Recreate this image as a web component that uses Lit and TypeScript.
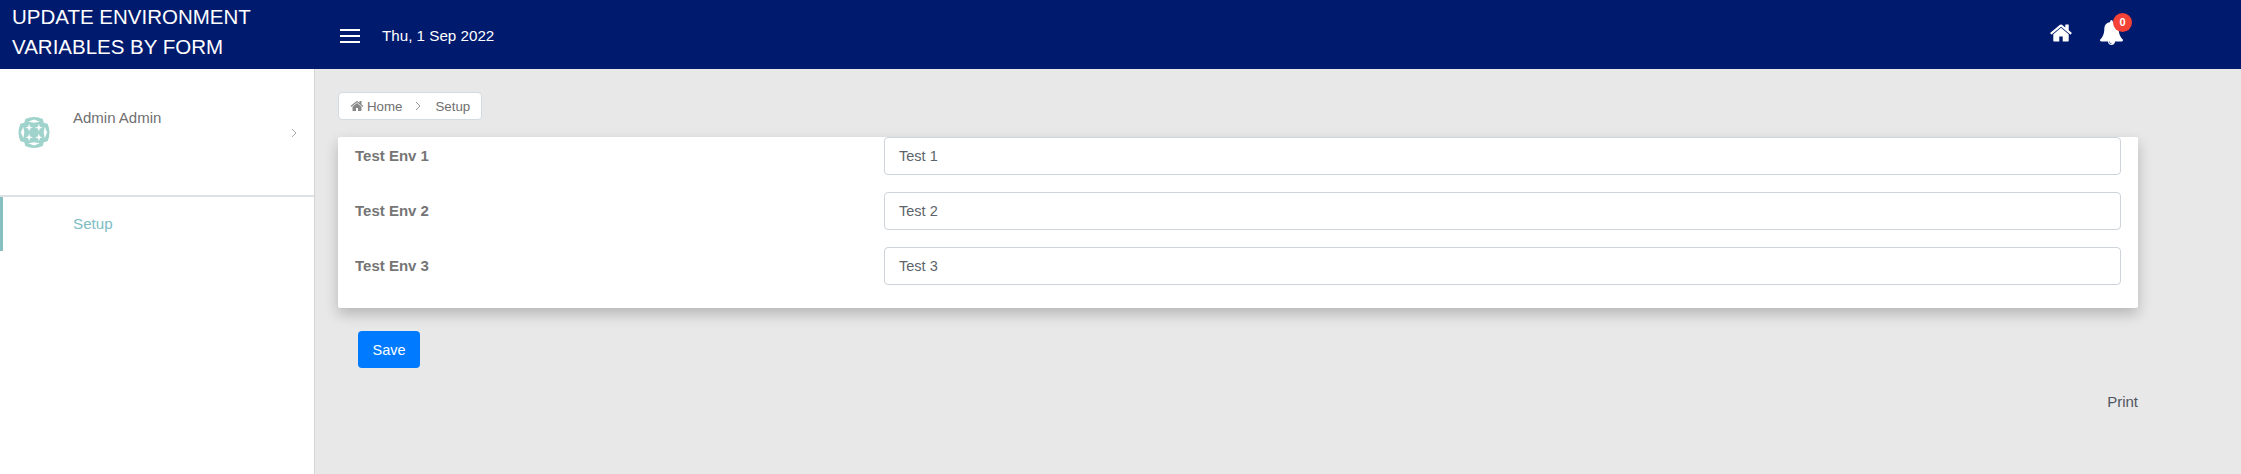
import { LitElement, html, css, svg } from "lit";
import { customElement } from "lit/decorators.js";

const HOME = "M1472 992v480q0 26-19 45t-45 19h-384v-384h-256v384h-384q-26 0-45-19t-19-45v-480q0-1 .5-3t.5-3l575-474 575 474q1 2 1 6zm223-69l-62 74q-8 9-21 11h-3q-13 0-21-7l-692-577-692 577q-12 8-24 7-13-2-21-11l-62-74q-8-10-7-23.5t11-21.5l719-599q32-26 76-26t76 26l244 204v-195q0-14 9-23t23-9h192q14 0 23 9t9 23v408l219 182q10 8 11 21.5t-7 23.5z";
const BELL = "M912 1696q0-16-16-16-59 0-101.5-42.5t-42.5-101.5q0-16-16-16t-16 16q0 73 51.5 124.5t124.5 51.5q16 0 16-16zm816-288q0 52-38 90t-90 38h-448q0 106-75 181t-181 75-181-75-75-181h-448q-52 0-90-38t-38-90q50-42 91-88t85-119.5 74.5-158.5 50-206 19.5-260q0-152 117-282.5t307-158.5q-8-19-8-39 0-40 28-68t68-28 68 28 28 68q0 20-8 39 190 28 307 158.5t117 282.5q0 139 19.5 260t50 206 74.5 158.5 85 119.5 91 88z";

const star = (x: number, y: number) =>
  svg`<path d="M${x} ${y - 4} L${x + 1} ${y - 1} L${x + 4} ${y} L${x + 1} ${y + 1} L${x} ${y + 4} L${x - 1} ${y + 1} L${x - 4} ${y} L${x - 1} ${y - 1} Z"/>`;

const logo = svg`<svg class="logo" viewBox="0 0 34 34" width="34" height="33">
  <path fill="#9fd3cb" d="M8 3 Q17 -1 26 3 L27 7 L31 8 Q35 17 31 26 L27 27 L26 31 Q17 35 8 31 L7 27 L3 26 Q-1 17 3 8 L7 7 Z"/>
  <g fill="#fff">
    ${star(12, 12)}${star(22, 12)}${star(12, 22)}${star(22, 22)}
    <path d="M11 6 L17 3.500 L23 6 L17 7 Z"/><path d="M11 28 L17 30.500 L23 28 L17 27 Z"/>
    <path d="M6 11 L3.500 17 L6 23 L7 17 Z"/><path d="M28 11 L30.500 17 L28 23 L27 17 Z"/>
  </g>
</svg>`;

@customElement("app-root")
export class AppRoot extends LitElement {
  static styles = css`
    :host { display: block; width: 2241px; height: 474px; overflow: hidden; background: #e8e8e8;
      font-family: "Liberation Sans", Arial, sans-serif; font-size: 14px; color: #666; }
    * { box-sizing: border-box; }
    .top { height: 69px; background: #001a6e; color: #fff; display: flex; align-items: center; }
    .title { width: 314px; padding: 0 12px; font-size: 20.500px; line-height: 30px; margin-top: -5px; flex: none; }
    .burger { width: 20px; height: 14px; margin: 2px 22px 0 26px; display: flex; flex-direction: column; justify-content: space-between; flex: none; }
    .burger i { display: block; height: 2px; background: #fff; }
    .date { font-size: 15.200px; margin-top: 2px; }
    .actions { margin-left: auto; margin-right: 117px; margin-top: -4px; display: flex; align-items: center; gap: 26px; }
    .home { width: 24px; height: 24px; display: block; fill: #fff; }
    .bell-wrap { position: relative; width: 25px; height: 25px; }
    .bell { width: 25px; height: 25px; display: block; fill: #fff; }
    .badge { position: absolute; left: 14px; top: -7px; width: 19px; height: 19px; border-radius: 50%;
      background: #f44336; color: #fff; font-size: 11px; font-weight: 700; line-height: 19px; text-align: center; }
    .body { display: flex; height: 405px; }
    .side { width: 315px; flex: none; background: #fff; border-right: 1px solid #d6d6d6; }
    .user { height: 128px; border-bottom: 2px solid #dee2e6; display: flex; padding: 0 17px; }
    .logo { margin-top: 47px; flex: none; }
    .name { margin: 40px 0 0 22px; font-size: 15px; line-height: 18px; color: #707070; }
    .chev { margin-left: auto; margin-top: 59px; width: 6px; height: 10px; fill: none; stroke: #aaa; stroke-width: 1; }
    .nav { height: 54px; border-left: 3px solid #85bfbf; padding: 18px 0 0 70px; color: #7dbdc4; font-size: 15.200px; line-height: 18px; }
    .main { flex: 1; padding: 23px 103px 0 23px; min-width: 0; }
    .crumb { display: inline-flex; align-items: center; height: 28px; padding: 0 11px; background: #fff;
      border: 1px solid #d3dbe0; border-radius: 4px; font-size: 13.300px; color: #707070; }
    .crumb svg.h { width: 14px; height: 14px; fill: #888; margin-right: 3px; }
    .crumb svg.c { width: 6px; height: 10px; fill: none; stroke: #999; stroke-width: 1; margin: 0 14px 0 13px; }
    .card { margin-top: 17px; width: 1800px; height: 171px; background: #fff; border-radius: 2px;
      box-shadow: 0 6px 14px rgba(0,0,0,.22); padding-right: 17px; display: flex; flex-direction: column; gap: 17px; }
    .row { display: grid; grid-template-columns: 546px 1fr; height: 38px; }
    .row label { padding-left: 17px; font-weight: 700; font-size: 15px; color: #757575; line-height: 37px; }
    .field { height: 38px; border: 1px solid #ced4da; border-radius: 4px; padding: 0 14px; line-height: 36px; color: #5c636a; font-size: 14.500px; }
    .save { display: block; margin: 23px 0 0 20px; width: 62px; height: 37px; border: 0; border-radius: 4px; background: #007bff; color: #fff;
      font: 14.500px "Liberation Sans", Arial, sans-serif; padding: 0; }
    .print { width: 1800px; text-align: right; margin-top: 25px; font-size: 15px; line-height: 18px; color: #4d5560; }
  `;

  render() {
    return html`
      <div class="top">
        <div class="title">UPDATE ENVIRONMENT<br />VARIABLES BY FORM</div>
        <div class="burger"><i></i><i></i><i></i></div>
        <div class="date">Thu, 1 Sep 2022</div>
        <div class="actions">
          <svg class="home" viewBox="0 0 1792 1792"><path d=${HOME}></path></svg>
          <div class="bell-wrap">
            <svg class="bell" viewBox="0 0 1792 1792"><path d=${BELL}></path></svg>
            <span class="badge">0</span>
          </div>
        </div>
      </div>
      <div class="body">
        <aside class="side">
          <div class="user">
            ${logo}
            <div class="name">Admin Admin</div>
            <svg class="chev" viewBox="0 0 6 10"><path d="M1 1 L5 5 L1 9"></path></svg>
          </div>
          <div class="nav">Setup</div>
        </aside>
        <main class="main">
          <div class="crumb">
            <svg class="h" viewBox="0 0 1792 1792"><path d=${HOME}></path></svg>
            <span>Home</span>
            <svg class="c" viewBox="0 0 6 10"><path d="M1 1 L5 5 L1 9"></path></svg>
            <span>Setup</span>
          </div>
          <div class="card">
            ${[1, 2, 3].map(
              (n) => html`<div class="row"><label>Test Env ${n}</label><div class="field">Test ${n}</div></div>`
            )}
          </div>
          <button class="save">Save</button>
          <div class="print">Print</div>
        </main>
      </div>
    `;
  }
}
